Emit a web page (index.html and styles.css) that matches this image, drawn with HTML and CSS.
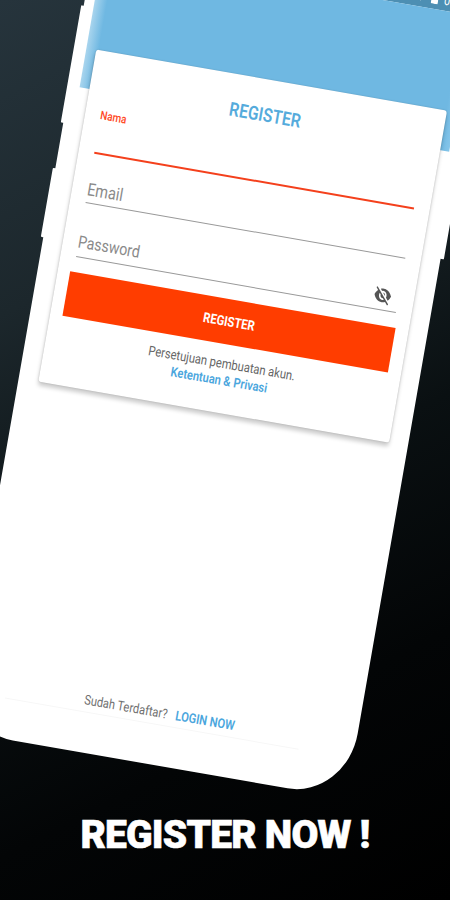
FILE: index.html
```html
<!DOCTYPE html>
<html lang="id">

<head>
  <meta charset="UTF-8">
  <meta name="viewport" content="width=device-width, initial-scale=1.0">
  <title>Register</title>
  <link rel="stylesheet" href="styles.css">
</head>

<body>
  <div id="banner">
    <div class="phone">
      <span class="key key-top"></span>
      <span class="key key-left"></span>
      <span class="key key-right"></span>
      <div class="screen">
        <div class="status-bar">
          <svg width="11" height="11" viewBox="0 0 14 12"><path d="M0 3Q7-2 14 3L7 12Z" fill="#b9d3df"/></svg>
          <svg width="9" height="12" viewBox="0 0 9 13"><path d="M0 1h3V0h3v1h3v12H0z" fill="#fff"/></svg>
          <span>0</span>
        </div>
        <div class="header"></div>
        <form class="card">
          <h2 class="title">REGISTER</h2>
          <div class="field active"><label>Nama</label></div>
          <div class="field email"><label>Email</label></div>
          <div class="field password">
            <label>Password</label>
            <svg class="eye" viewBox="0 0 24 24"><path d="M12 7c2.76 0 5 2.24 5 5 0 .65-.13 1.26-.36 1.83l2.92 2.92c1.51-1.26 2.7-2.89 3.43-4.75-1.73-4.39-6-7.5-11-7.5-1.4 0-2.74.25-3.98.7l2.16 2.16C10.74 7.13 11.35 7 12 7zM2 4.27l2.28 2.28.46.46C3.08 8.3 1.78 10.02 1 12c1.73 4.39 6 7.5 11 7.5 1.55 0 3.03-.3 4.38-.84l.42.42L19.73 22 21 20.73 3.27 3 2 4.27zM7.53 9.8l1.55 1.55c-.05.21-.08.43-.08.65 0 1.66 1.34 3 3 3 .22 0 .44-.03.65-.08l1.55 1.55c-.67.33-1.41.53-2.2.53-2.76 0-5-2.24-5-5 0-.79.2-1.53.53-2.2zm4.31-.78l3.15 3.15.02-.16c0-1.66-1.34-3-3-3l-.17.01z"/></svg>
          </div>
          <button type="button" class="submit">REGISTER</button>
          <p class="terms">Persetujuan pembuatan akun.</p>
          <a class="terms link">Ketentuan &amp; Privasi</a>
        </form>
        <div class="footer">
          <span>Sudah Terdaftar?</span>
          <a class="link">LOGIN NOW</a>
        </div>
      </div>
    </div>
    <h1 class="headline">REGISTER NOW !</h1>
  </div>
</body>

</html>
```
FILE: styles.css
```css
* {
  margin: 0;
  padding: 0;
  box-sizing: border-box;
}

body {
  font-family: Roboto, "Liberation Sans", sans-serif;
}

#banner {
  position: relative;
  display: flex;
  flex-direction: column;
  justify-content: flex-end;
  align-items: center;
  width: 450px;
  height: 900px;
  padding-bottom: 41px;
  overflow: hidden;
  background: linear-gradient(153deg, #26343c 0%, #1c272c 28%, #0a1012 55%, #030506 76%, #000 100%);
}

/* tilted phone, lies over the background */
.phone {
  position: absolute;
  left: 99px;
  top: -82.4px;
  width: 476px;
  height: 825px;
  padding: 10px 12px 40px;
  background: #fff;
  border-radius: 0 0 72px 68px / 0 0 66px 62px;
  transform-origin: 0 0;
  transform: rotate(9.9deg) scaleX(.83);
}

.key {
  position: absolute;
  width: 10px;
  background: #fff;
  border-radius: 1px;
}

.key-top {
  left: -3px;
  top: 89px;
  height: 119px;
}

.key-left {
  left: -3.5px;
  top: 254px;
  height: 70px;
}

.key-right {
  right: -4px;
  top: 200px;
  height: 77px;
}

.screen {
  display: flex;
  flex-direction: column;
  height: 775px;
}

.status-bar {
  display: flex;
  justify-content: flex-end;
  align-items: center;
  gap: 7px;
  height: 22px;
  padding-right: 30px;
  color: #fff;
  font-size: 13px;
  background: #4d8fb3;
}

.header {
  flex: none;
  height: 138px;
  background: linear-gradient(90deg, #a9d5ee 0, #6fb8e2 15px, #6fb8e2 440px, #86c6ea 100%);
}

.card {
  display: flex;
  flex-direction: column;
  height: 337px;
  margin: -40px 11.5px 0;
  padding: 24px 15.5px 0;
  background: #fff;
  border-radius: 3px;
  box-shadow: 0 4px 5px rgba(0, 0, 0, .2), 0 0 2px rgba(0, 0, 0, .2);
}

.title {
  line-height: 24px;
  font-size: 19px;
  font-weight: 600;
  text-align: center;
  color: #55abdc;
}

.field {
  display: flex;
  align-items: flex-end;
  justify-content: space-between;
  margin: 0 3.5px;
  border-bottom: 1.4px solid #999;
  font-size: 17.5px;
  line-height: 20px;
  color: #8a8a8a;
}

.active {
  align-items: flex-start;
  height: 47px;
  margin-top: 8px;
  border-bottom: 2px solid #f4401c;
  font-size: 12px;
  font-weight: 500;
  line-height: 17px;
  color: #ff4a26;
}

.email {
  height: 50px;
  padding-bottom: 3px;
}

.password {
  height: 55px;
  padding-bottom: 5px;
}

.password label {
  font-size: 17px;
}

.eye {
  width: 22px;
  height: 22px;
  margin-right: 8px;
  margin-bottom: -2px;
  fill: #555;
}

.submit {
  flex: none;
  height: 44.5px;
  margin-top: 15px;
  border: none;
  font-family: inherit;
  font-size: 13.6px;
  font-weight: 700;
  color: #fff;
  background: #ff3d00;
}

.terms {
  font-size: 13.5px;
  line-height: 17px;
  text-align: center;
  color: #666;
}

p.terms {
  margin-top: 11px;
}

.link {
  font-weight: 600;
  color: #4ba6dd;
}

a.terms {
  font-size: 13.4px;
}

.footer {
  display: flex;
  justify-content: center;
  gap: 10px;
  margin: auto 55px 0 38px;
  padding: 0 0 3px 14px;
  border-bottom: 1px solid #f7f7f7;
  font-size: 13.4px;
  line-height: 17px;
  color: #707070;
}

.headline {
  line-height: 48px;
  font-size: 39px;
  font-weight: 900;
  letter-spacing: -.8px;
  color: #fff;
  -webkit-text-stroke: .6px #fff;
}
```
